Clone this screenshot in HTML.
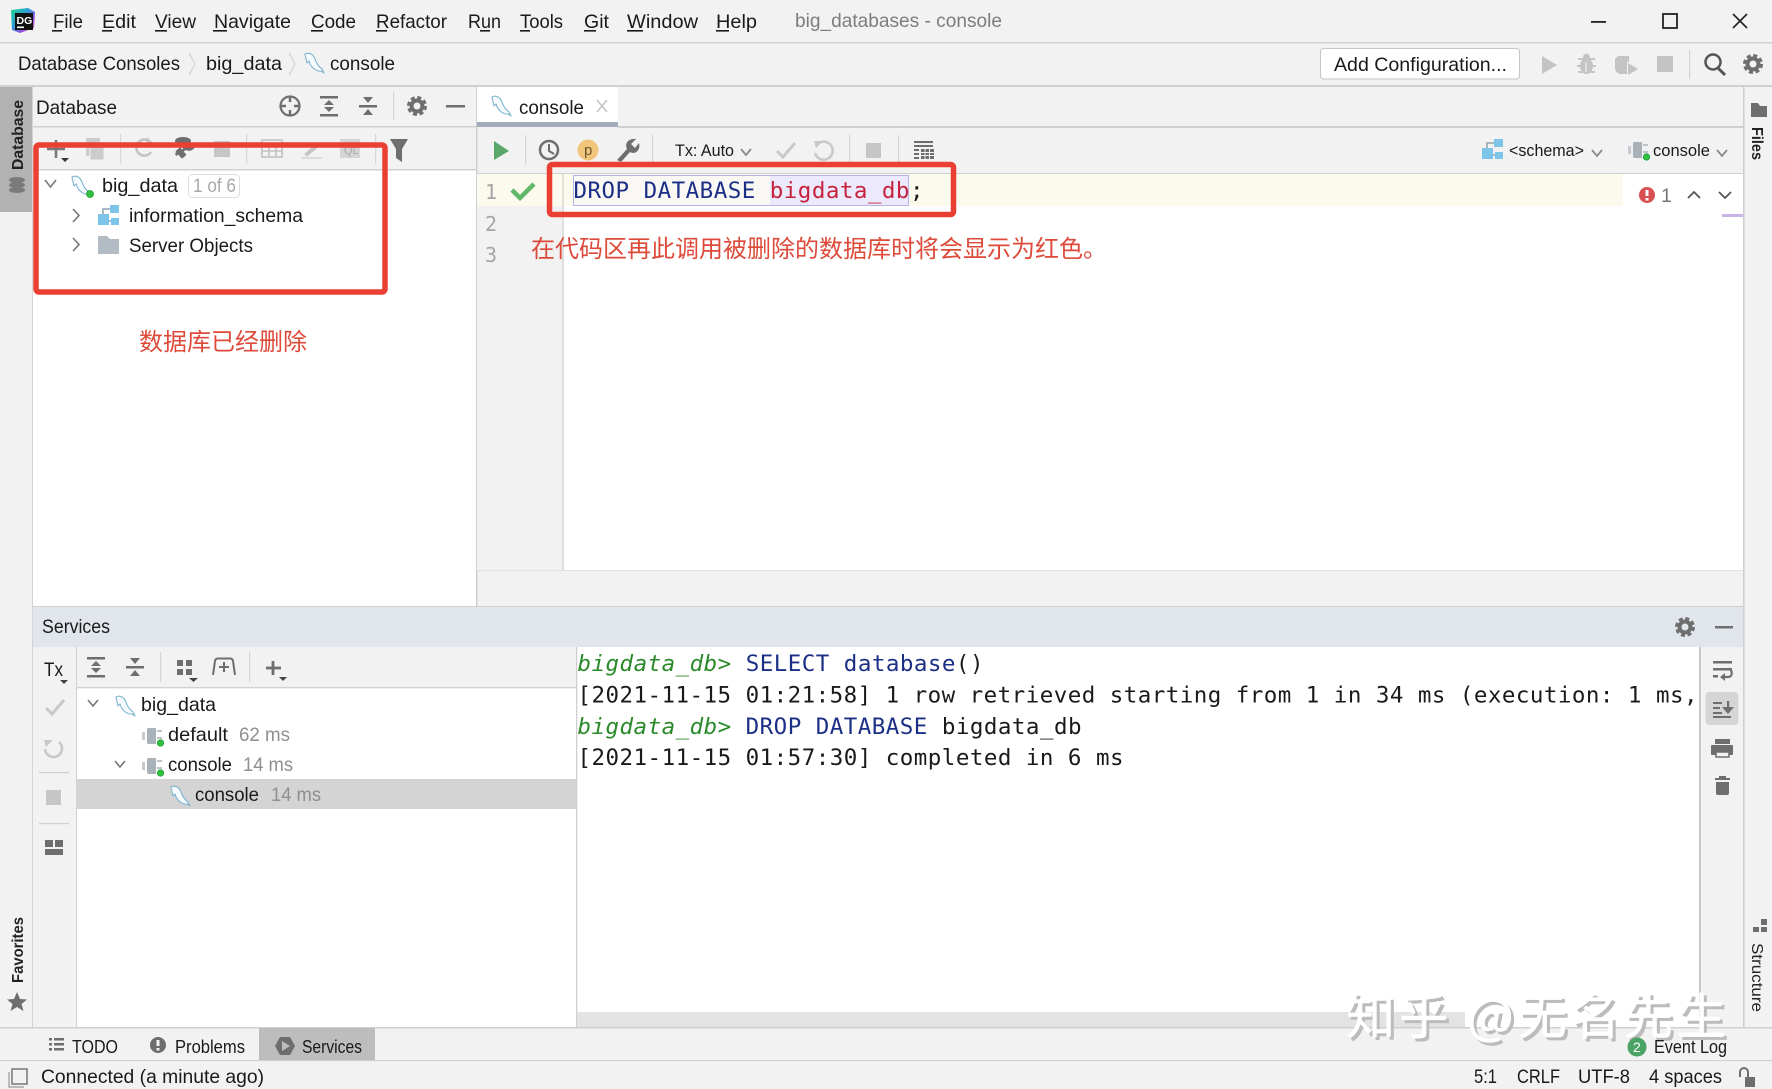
<!DOCTYPE html>
<html lang="zh"><head><meta charset="utf-8"><title>big_databases - console</title>
<style>
html,body{margin:0;padding:0;width:1772px;height:1089px;overflow:hidden;background:#f2f2f2}
svg{display:block}
text{font-family:"Liberation Sans","Noto Sans CJK SC",sans-serif;font-size:19.5px;fill:#1a1a1a;white-space:pre}
.m{font-family:"DejaVu Sans Mono","Liberation Mono",monospace;font-size:22.5px}
.g{fill:#8f8f8f}
.zh{font-family:"Noto Sans CJK SC","WenQuanYi Zen Hei",sans-serif;font-size:24px;fill:#dd4a3a}
.wm{font-family:"Noto Sans CJK SC",sans-serif;font-size:49px}
.pi{fill:none;stroke:#c2c2c2;stroke-width:2.5}
</style></head><body>
<svg width="1772" height="1089" viewBox="0 0 1772 1089" xmlns="http://www.w3.org/2000/svg">
<defs>
<linearGradient id="lg" x1="0" y1="0" x2="1" y2="1"><stop offset="0" stop-color="#21d789"/><stop offset=".4" stop-color="#2a9fd8"/><stop offset=".7" stop-color="#9a4ae0"/><stop offset="1" stop-color="#fc5fa3"/></linearGradient>
<g id="dol"><path d="M2 2C6 0 10 2 12 7C13 11 16 15 19 17L21 21L18 19L15 19C10 17 7 13 6 9L4 11L3 7C3 5 2 4 2 2Z" fill="#f6fbfe" stroke="#7fb4cf" stroke-width="1.1" stroke-linejoin="round"/></g>
<g id="conn"><path d="M8 0H15V16H8A2 2 0 0 1 6 14V2A2 2 0 0 1 8 0Z" fill="#a9b2b9"/><rect x="1" y="4" width="3" height="8" fill="#c5cbd0"/><rect x="16" y="2" width="5" height="2" fill="#bcc3c8"/><rect x="16" y="9" width="5" height="2" fill="#bcc3c8"/><circle cx="19.5" cy="15" r="3.2" fill="#2fc23f" stroke="#1f9a32" stroke-width=".8"/></g>
<g id="sch"><rect x="0" y="9" width="11" height="11" fill="#7cc4e8"/><rect x="12" y="0" width="9" height="8" fill="#7cc4e8"/><rect x="13" y="13" width="8" height="7" fill="#7cc4e8"/><path d="M5 9V4H12M11 16H13" fill="none" stroke="#8fa3b0" stroke-width="1.5"/></g>
<g id="gear"><circle r="5.5" fill="none" stroke="#6e6e6e" stroke-width="4"/><circle r="8.5" fill="none" stroke="#6e6e6e" stroke-width="3" stroke-dasharray="4 2.68"/></g>
</defs>

<!-- base panels -->
<rect width="1772" height="1089" fill="#f2f2f2"/>
<rect x="0" y="42" width="1772" height="1.5" fill="#d0d0d0"/>
<rect x="0" y="85" width="1772" height="2" fill="#d0d0d0"/>
<rect x="0" y="87" width="32" height="125" fill="#b2b2b2"/>
<rect x="32" y="87" width="1" height="940" fill="#d4d4d4"/>
<rect x="33" y="170" width="443" height="436" fill="#fff"/>
<rect x="33" y="126" width="443" height="1.5" fill="#d0d0d0"/>
<rect x="33" y="169" width="443" height="1.5" fill="#d0d0d0"/>
<rect x="476" y="87" width="1.5" height="519" fill="#cfcfcf"/>
<rect x="477" y="87" width="141" height="36" fill="#fff"/>
<rect x="477" y="122" width="141" height="5" fill="#a3acba"/>
<rect x="618" y="126" width="1126" height="2" fill="#d0d0d0"/>
<rect x="477" y="173" width="1267" height="1.5" fill="#d0d0d0"/>
<rect x="563" y="174" width="1181" height="396" fill="#fff"/>
<rect x="477" y="174" width="86" height="396" fill="#f2f2f2"/>
<rect x="477" y="174" width="1146" height="32" fill="#fcfaed"/>
<rect x="562.5" y="174" width="1.2" height="396" fill="#cfcfcf"/>
<rect x="477" y="570" width="1267" height="1" fill="#e2e2e2"/>
<rect x="1743" y="87" width="1.5" height="940" fill="#cfcfcf"/>
<rect x="1722" y="214" width="21" height="3" fill="#c9b4e8"/>

<!-- services -->
<rect x="33" y="606" width="1711" height="1.5" fill="#cfcfcf"/>
<rect x="33" y="607" width="1710" height="40" fill="#e1e5ec"/>
<rect x="76" y="688" width="501" height="339" fill="#fff"/>
<rect x="76" y="687" width="501" height="1.3" fill="#d0d0d0"/>
<rect x="76" y="647" width="1" height="380" fill="#cfcfcf"/>
<rect x="577" y="647" width="1123" height="380" fill="#fff"/>
<rect x="576" y="647" width="1.3" height="380" fill="#cfcfcf"/>
<rect x="1699" y="647" width="2" height="380" fill="#c9c9c9"/>
<rect x="76" y="779" width="500" height="30" fill="#d4d4d4"/>
<rect x="577" y="1012" width="888" height="15" fill="#e3e3e3"/>
<rect x="0" y="1027" width="1772" height="1.5" fill="#d0d0d0"/>
<rect x="259" y="1028" width="116" height="32" fill="#bdbdbd"/>
<rect x="0" y="1060" width="1772" height="1.2" fill="#d4d4d4"/>

<!-- title bar -->
<path d="M11 10L28 8L35 12L34 28L20 33L12 30Z" fill="url(#lg)"/>
<rect x="15" y="13" width="18" height="17" fill="#111"/>
<text x="16.5" y="24" style="fill:#fff;font-size:10.5px;font-weight:700">DG</text>
<rect x="17" y="26.5" width="7" height="1.6" fill="#fff"/>
<text x="53" y="28" textLength="30" lengthAdjust="spacingAndGlyphs">File</text>
<text x="102" y="28" textLength="34" lengthAdjust="spacingAndGlyphs">Edit</text>
<text x="155" y="28" textLength="41" lengthAdjust="spacingAndGlyphs">View</text>
<text x="214" y="28" textLength="77" lengthAdjust="spacingAndGlyphs">Navigate</text>
<text x="311" y="28" textLength="45" lengthAdjust="spacingAndGlyphs">Code</text>
<text x="376" y="28" textLength="71" lengthAdjust="spacingAndGlyphs">Refactor</text>
<text x="468" y="28" textLength="33" lengthAdjust="spacingAndGlyphs">Run</text>
<text x="520" y="28" textLength="43" lengthAdjust="spacingAndGlyphs">Tools</text>
<text x="584" y="28" textLength="25" lengthAdjust="spacingAndGlyphs">Git</text>
<text x="627" y="28" textLength="71" lengthAdjust="spacingAndGlyphs">Window</text>
<text x="716" y="28" textLength="41" lengthAdjust="spacingAndGlyphs">Help</text>
<g fill="#1a1a1a"><rect x="52" y="30" width="10" height="1.6"/><rect x="102" y="30" width="10" height="1.6"/><rect x="155" y="30" width="12" height="1.6"/><rect x="213" y="30" width="14" height="1.6"/><rect x="311" y="30" width="12" height="1.6"/><rect x="376" y="30" width="11" height="1.6"/><rect x="480" y="30" width="10" height="1.6"/><rect x="520" y="30" width="10" height="1.6"/><rect x="584" y="30" width="12" height="1.6"/><rect x="627" y="30" width="16" height="1.6"/><rect x="716" y="30" width="13" height="1.6"/></g>
<text x="795" y="27" textLength="207" lengthAdjust="spacingAndGlyphs" style="fill:#7d7d7d">big_databases - console</text>
<rect x="1591" y="21" width="15" height="1.8" fill="#222"/>
<rect x="1663" y="14" width="14" height="14" fill="none" stroke="#222" stroke-width="1.8"/>
<path d="M1733 14L1747 28M1747 14L1733 28" stroke="#222" stroke-width="1.6"/>

<!-- nav bar -->
<text x="18" y="70" textLength="162" lengthAdjust="spacingAndGlyphs">Database Consoles</text>
<path d="M189 53L195 64L189 75" fill="none" stroke="#d8d8d8" stroke-width="1.5"/>
<text x="206" y="70" textLength="76" lengthAdjust="spacingAndGlyphs">big_data</text>
<path d="M289 53L295 64L289 75" fill="none" stroke="#d8d8d8" stroke-width="1.5"/>
<use href="#dol" x="303" y="52"/>
<text x="330" y="70" textLength="65" lengthAdjust="spacingAndGlyphs">console</text>
<rect x="1320.5" y="48.5" width="199" height="30.5" rx="3" fill="#fff" stroke="#c6c6c6"/>
<text x="1334" y="71" textLength="173" lengthAdjust="spacingAndGlyphs">Add Configuration...</text>
<path d="M1542 56L1557 65L1542 74Z" fill="#c4c4c4"/>
<g fill="#c4c4c4"><ellipse cx="1586.5" cy="66" rx="6.5" ry="8"/><circle cx="1586.5" cy="57" r="3.5"/></g>
<path d="M1578 59L1595 59M1577 66L1596 66M1578 72L1595 72" stroke="#c4c4c4" stroke-width="2"/>
<path d="M1586 62.5V72" stroke="#f2f2f2" stroke-width="1.2"/>
<path d="M1618 56H1629V62L1627 62V74H1621A6 6 0 0 1 1615 68V59Z" fill="#c4c4c4"/><path d="M1628 63L1638 69L1628 75Z" fill="#c4c4c4"/>
<rect x="1657" y="56" width="16" height="16" fill="#c4c4c4"/>
<rect x="1689" y="50" width="1.2" height="29" fill="#d4d4d4"/>
<circle cx="1713" cy="62" r="7.5" fill="none" stroke="#555" stroke-width="2.5"/><path d="M1718 68L1725 75" stroke="#555" stroke-width="3"/>
<use href="#gear" x="1753" y="64"/>

<!-- left stripe -->
<text transform="translate(23,170) rotate(-90)" textLength="70" lengthAdjust="spacingAndGlyphs" style="font-size:16px;font-weight:700;fill:#222">Database</text>
<g fill="#7a7a7a"><ellipse cx="17" cy="180" rx="8" ry="3"/><ellipse cx="17" cy="185" rx="8" ry="3"/><ellipse cx="17" cy="190" rx="8" ry="3"/></g>
<text transform="translate(23,983) rotate(-90)" textLength="66" lengthAdjust="spacingAndGlyphs" style="font-size:16px;font-weight:700;fill:#222">Favorites</text>
<path d="M17 992L20 999L27 999.5L21.5 1004L23.5 1011L17 1007L10.5 1011L12.5 1004L7 999.5L14 999Z" fill="#6e6e6e"/>

<!-- right stripe -->
<path d="M1751 103L1758 103L1760 106L1767 106L1767 117L1751 117Z" fill="#6e6e6e"/>
<text transform="translate(1752,127) rotate(90)" textLength="33" lengthAdjust="spacingAndGlyphs" style="font-size:16px;font-weight:700;fill:#222">Files</text>
<g fill="#6e6e6e"><rect x="1753" y="927" width="6" height="5"/><rect x="1761" y="927" width="6" height="5"/><rect x="1761" y="919" width="6" height="6"/></g>
<text transform="translate(1752,943) rotate(90)" textLength="69" lengthAdjust="spacingAndGlyphs" style="font-size:16px;fill:#222">Structure</text>

<!-- database panel header -->
<text x="36" y="114" textLength="81" lengthAdjust="spacingAndGlyphs">Database</text>
<circle cx="290" cy="106" r="9.5" fill="none" stroke="#6e6e6e" stroke-width="2.2"/>
<path d="M290 96V102M290 110V116M280 106H286M294 106H300" stroke="#6e6e6e" stroke-width="2.5"/>
<g fill="#6e6e6e"><rect x="320" y="96" width="18" height="2.5"/><rect x="320" y="114" width="18" height="2.5"/><path d="M329 100L334 105H324ZM329 112L334 107H324Z"/><rect x="359" y="105" width="18" height="2.5"/><path d="M368 103L363 97H373ZM368 109L363 115H373Z"/></g>
<rect x="393" y="92" width="1.2" height="28" fill="#d4d4d4"/>
<use href="#gear" x="417" y="106"/>
<rect x="446" y="105" width="19" height="2.5" fill="#6e6e6e"/>

<!-- db toolbar -->
<path d="M56 140V158M47 149H65" stroke="#777" stroke-width="2.5"/><path d="M61 158L69 158L65 162Z" fill="#333"/>
<g fill="#cccccc"><rect x="86" y="138" width="14" height="18"/><rect x="90" y="144" width="14" height="16" stroke="#f2f2f2"/></g>
<rect x="120" y="134" width="1.2" height="30" fill="#d8d8d8"/>
<path d="M150 142A8 8 0 1 0 151 152" class="pi"/><path d="M147 137L153 143L146 145Z" fill="#c2c2c2"/>
<ellipse cx="183" cy="141" rx="8" ry="4" fill="#6e6e6e"/>
<path d="M176 156L186 150C190 152 195 150 196 144L192 148L188 146L190 143C185 142 182 146 183 149L175 153Z" fill="#6e6e6e"/><rect x="178" y="148" width="6" height="10" transform="rotate(-40 181 153)" fill="#6e6e6e"/>
<rect x="214" y="141" width="16" height="16" fill="#c6c6c6"/>
<rect x="246" y="134" width="1.2" height="30" fill="#d8d8d8"/>
<g class="pi" style="stroke-width:1.6"><rect x="262" y="140" width="20" height="17"/><path d="M262 146H282M262 151H282M269 146V157M276 146V157"/></g>
<path d="M301 158H322M305 154L317 143L319 146L307 156Z" fill="#c6c6c6" stroke="#c6c6c6"/>
<rect x="340" y="139" width="20" height="19" fill="#d5d5d5"/>
<text x="344" y="154" style="font-size:11px;fill:#a8a8a8">QL</text>
<rect x="375" y="134" width="1.2" height="30" fill="#d8d8d8"/>
<path d="M390 139H408L402 149V162L396 158V149Z" fill="#6e6e6e"/>

<!-- db tree -->
<path d="M45 180L50.5 187L56 180" fill="none" stroke="#777" stroke-width="1.6"/>
<use href="#dol" x="70" y="175"/><circle cx="90" cy="194" r="3.5" fill="#2fc23f" stroke="#1f9a32" stroke-width=".8"/>
<text x="102" y="192" textLength="76" lengthAdjust="spacingAndGlyphs">big_data</text>
<rect x="188.5" y="174.5" width="51" height="23" rx="4" fill="#fff" stroke="#dedede"/>
<text x="193" y="192" textLength="43" lengthAdjust="spacingAndGlyphs" style="fill:#a8a8a8">1 of 6</text>
<path d="M73 209L79 215.5L73 222" fill="none" stroke="#777" stroke-width="1.6"/>
<use href="#sch" x="98" y="205"/>
<text x="129" y="222" textLength="174" lengthAdjust="spacingAndGlyphs">information_schema</text>
<path d="M73 238L79 244.5L73 251" fill="none" stroke="#777" stroke-width="1.6"/>
<path d="M98 236H107L110 239H119V254H98Z" fill="#b3bcc4"/>
<text x="129" y="252" textLength="124" lengthAdjust="spacingAndGlyphs">Server Objects</text>

<!-- red annotation 1 -->
<rect x="36" y="145" width="349" height="147" rx="3" fill="none" stroke="#ea3f33" stroke-width="5.5"/>
<text x="139" y="350" class="zh">数据库已经删除</text>

<!-- editor tab -->
<use href="#dol" x="490" y="95"/>
<text x="519" y="114" textLength="65" lengthAdjust="spacingAndGlyphs">console</text>
<path d="M597 100L607 112M607 100L597 112" stroke="#c6c6c6" stroke-width="1.6"/>

<!-- editor toolbar -->
<path d="M494 141L509 151L494 160Z" fill="#59a869"/>
<rect x="525" y="135" width="1.2" height="30" fill="#d4d4d4"/>
<circle cx="549" cy="150" r="9" fill="none" stroke="#6e6e6e" stroke-width="2.5"/><path d="M549 144V151L554 154" fill="none" stroke="#6e6e6e" stroke-width="2"/>
<circle cx="588" cy="150" r="10.5" fill="#f2c57c"/><text x="584" y="155" style="font-size:15px;fill:#6b5530">p</text>
<path d="M617 160L627 149C624 143 629 138 636 139L631 144L635 148L639 143C641 150 635 155 630 152L621 162Z" fill="#6e6e6e"/>
<rect x="652" y="135" width="1.2" height="30" fill="#d4d4d4"/>
<text x="675" y="156" textLength="59" lengthAdjust="spacingAndGlyphs" style="font-size:16.5px">Tx: Auto</text>
<path d="M741 149L746 155L751 149" fill="none" stroke="#8a8a8a" stroke-width="1.8"/>
<path d="M777 151L783 157L795 143" fill="none" stroke="#c9c9c9" stroke-width="3"/>
<path d="M819 143A9 9 0 1 1 815 153" fill="none" stroke="#c9c9c9" stroke-width="2.6"/><path d="M814 141L823 141L816 148Z" fill="#c9c9c9"/>
<rect x="849" y="135" width="1.2" height="30" fill="#d4d4d4"/>
<rect x="866" y="143" width="15" height="15" fill="#c6c6c6"/>
<rect x="898" y="135" width="1.2" height="30" fill="#d4d4d4"/>
<g fill="#6e6e6e"><rect x="914" y="141" width="19" height="2"/><rect x="914" y="145" width="19" height="2"/><rect x="914" y="149" width="5" height="2"/><rect x="914" y="153" width="5" height="2"/><rect x="914" y="157" width="5" height="2"/><rect x="921" y="149" width="13" height="10"/></g>
<path d="M921 152.5H934M921 155.5H934M925 149V159M929.5 149V159" stroke="#f2f2f2" stroke-width="1"/>
<use href="#sch" x="1482" y="139"/>
<text x="1509" y="156" textLength="75" lengthAdjust="spacingAndGlyphs" style="font-size:16.5px">&lt;schema&gt;</text>
<path d="M1592 150L1597 156L1602 150" fill="none" stroke="#8a8a8a" stroke-width="1.8"/>
<use href="#conn" x="1627" y="142"/>
<text x="1653" y="156" textLength="57" lengthAdjust="spacingAndGlyphs" style="font-size:16.5px">console</text>
<path d="M1717 150L1722 156L1727 150" fill="none" stroke="#8a8a8a" stroke-width="1.8"/>

<!-- editor content -->
<text x="485" y="199" class="m" style="fill:#a5a5a5;font-size:20px">1</text>
<text x="485" y="231" class="m" style="fill:#a5a5a5;font-size:20px">2</text>
<text x="485" y="262" class="m" style="fill:#a5a5a5;font-size:20px">3</text>
<path d="M512 190L520 198L534 184" fill="none" stroke="#62b868" stroke-width="4.5"/>
<rect x="573.5" y="175.5" width="335" height="30" fill="#f9f8f4" stroke="#b5b5e8"/>
<rect x="770" y="176" width="138" height="29" fill="#ebe9fb"/>
<text x="573.5" y="198" class="m" textLength="350" lengthAdjust="spacing"><tspan style="fill:#1c2f86">DROP DATABASE </tspan><tspan style="fill:#c7223d">bigdata_db</tspan><tspan>;</tspan></text>
<rect x="549.5" y="164.5" width="404" height="50" rx="3" fill="none" stroke="#ea3f33" stroke-width="5.5"/>
<text x="531" y="257" class="zh">在代码区再此调用被删除的数据库时将会显示为红色。</text>

<circle cx="1647" cy="195" r="8" fill="#d95050"/><rect x="1645.5" y="190" width="3" height="6" fill="#fff"/><rect x="1645.5" y="198" width="3" height="2.5" fill="#fff"/>
<text x="1661" y="202" style="fill:#777">1</text>
<path d="M1688 198L1694 192L1700 198" fill="none" stroke="#555" stroke-width="1.8"/>
<path d="M1719 192L1725 198L1731 192" fill="none" stroke="#555" stroke-width="1.8"/>

<!-- services header -->
<text x="42" y="633" textLength="68" lengthAdjust="spacingAndGlyphs">Services</text>
<use href="#gear" x="1685" y="627"/>
<rect x="1715" y="626" width="18" height="2.5" fill="#6e6e6e"/>

<!-- services left toolbar -->
<text x="44" y="676" textLength="19" lengthAdjust="spacingAndGlyphs">Tx</text>
<path d="M60 680H68L64 684Z" fill="#444"/>
<path d="M46 708L52 714L64 700" fill="none" stroke="#c9c9c9" stroke-width="3"/>
<path d="M59 742A8.5 8.5 0 1 1 45 749" fill="none" stroke="#c9c9c9" stroke-width="2.6"/><path d="M44 740L53 740L46 747Z" fill="#c9c9c9"/>
<rect x="39" y="772" width="30" height="1.2" fill="#cfcfcf"/>
<rect x="46" y="790" width="15" height="15" fill="#c6c6c6"/>
<rect x="39" y="823" width="30" height="1.2" fill="#cfcfcf"/>
<g fill="#6e6e6e"><rect x="45" y="840" width="8" height="7"/><rect x="55" y="840" width="8" height="7"/><rect x="45" y="849" width="18" height="6"/></g>

<!-- services top toolbar -->
<g fill="#6e6e6e"><rect x="87" y="657" width="18" height="2.5"/><rect x="87" y="675" width="18" height="2.5"/><path d="M96 661L101 666H91ZM96 673L101 668H91Z"/><rect x="126" y="666" width="18" height="2.5"/><path d="M135 664L130 658H140ZM135 670L130 676H140Z"/>
<rect x="177" y="660" width="6" height="6"/><rect x="186" y="660" width="6" height="6"/><rect x="177" y="669" width="6" height="6"/><rect x="186" y="669" width="6" height="6"/></g>
<rect x="160" y="652" width="1.2" height="30" fill="#d4d4d4"/>
<path d="M189 678H198L193.5 682Z" fill="#444"/>
<path d="M213 675L215 661Q215.500 658.5 218 658.5H230Q232.500 658.5 233 661L235 675" fill="none" stroke="#6e6e6e" stroke-width="2"/><path d="M224 662V672M219 667H229" stroke="#6e6e6e" stroke-width="2"/>
<rect x="249" y="652" width="1.2" height="30" fill="#d4d4d4"/>
<path d="M273 661V675M266 668H281" stroke="#6e6e6e" stroke-width="2.8"/>
<path d="M279 677H287L283 681Z" fill="#444"/>

<!-- services tree -->
<path d="M88 700L93 706L98 700" fill="none" stroke="#777" stroke-width="1.6"/>
<use href="#dol" x="114" y="695"/>
<text x="141" y="711" textLength="75" lengthAdjust="spacingAndGlyphs">big_data</text>
<use href="#conn" x="141" y="728"/>
<text x="168" y="741" textLength="60" lengthAdjust="spacingAndGlyphs">default</text>
<text x="239" y="741" textLength="51" lengthAdjust="spacingAndGlyphs" class="g">62 ms</text>
<path d="M115 761L120 767L125 761" fill="none" stroke="#777" stroke-width="1.6"/>
<use href="#conn" x="141" y="758"/>
<text x="168" y="771" textLength="64" lengthAdjust="spacingAndGlyphs">console</text>
<text x="243" y="771" textLength="50" lengthAdjust="spacingAndGlyphs" class="g">14 ms</text>
<use href="#dol" x="169" y="785"/>
<text x="195" y="801" textLength="64" lengthAdjust="spacingAndGlyphs">console</text>
<text x="271" y="801" textLength="50" lengthAdjust="spacingAndGlyphs" class="g">14 ms</text>

<!-- console output -->
<text x="577.5" y="671" class="m" textLength="406" lengthAdjust="spacing"><tspan style="fill:#2a8a2a;font-style:italic">bigdata_db&gt;</tspan><tspan style="fill:#1c2f86"> SELECT database</tspan><tspan>()</tspan></text>
<text x="577.5" y="702.5" class="m" textLength="1120" lengthAdjust="spacing">[2021-11-15 01:21:58] 1 row retrieved starting from 1 in 34 ms (execution: 1 ms,</text>
<text x="577.5" y="734" class="m" textLength="504" lengthAdjust="spacing"><tspan style="fill:#2a8a2a;font-style:italic">bigdata_db&gt;</tspan><tspan style="fill:#1c2f86"> DROP DATABASE </tspan><tspan>bigdata_db</tspan></text>
<text x="577.5" y="765" class="m" textLength="546" lengthAdjust="spacing">[2021-11-15 01:57:30] completed in 6 ms</text>

<!-- services right toolbar -->
<g fill="#6e6e6e"><rect x="1713" y="661" width="19" height="2.5"/><rect x="1713" y="668" width="19" height="2.5"/><rect x="1713" y="675" width="5" height="2.5"/></g>
<path d="M1728 669C1733 669 1733 677 1728 677H1723" fill="none" stroke="#6e6e6e" stroke-width="2.2"/><path d="M1725 673V681L1720 677Z" fill="#6e6e6e"/>
<rect x="1705.5" y="692" width="33" height="33" rx="4" fill="#d5d5d5"/>
<g fill="#6e6e6e"><rect x="1713" y="702" width="9" height="2"/><rect x="1713" y="707" width="7" height="2"/><rect x="1713" y="712" width="9" height="2"/><rect x="1713" y="716" width="18" height="2"/><rect x="1727" y="701" width="2.2" height="9"/><path d="M1722 707H1734L1728 714Z"/></g>
<g fill="#6e6e6e"><rect x="1715" y="739" width="15" height="5"/><rect x="1711" y="745" width="22" height="10" rx="1"/><rect x="1716" y="752" width="13" height="5" fill="#f2f2f2" stroke="#6e6e6e" stroke-width="1.5"/></g>
<g fill="#6e6e6e"><rect x="1715" y="778" width="15" height="2"/><rect x="1719" y="776" width="7" height="2"/><path d="M1716 782H1729V793A2 2 0 0 1 1727 795H1718A2 2 0 0 1 1716 793Z"/></g>

<!-- bottom tabs -->
<g fill="#6e6e6e"><rect x="49" y="1038" width="3" height="2.5"/><rect x="54" y="1038" width="10" height="2.5"/><rect x="49" y="1043" width="3" height="2.5"/><rect x="54" y="1043" width="10" height="2.5"/><rect x="49" y="1048" width="3" height="2.5"/><rect x="54" y="1048" width="10" height="2.5"/></g>
<text x="72" y="1053" textLength="46" lengthAdjust="spacingAndGlyphs" style="font-size:18px">TODO</text>
<circle cx="158" cy="1045" r="8" fill="#6e6e6e"/><rect x="156.5" y="1040" width="3" height="6" fill="#f2f2f2"/><rect x="156.5" y="1048" width="3" height="2.5" fill="#f2f2f2"/>
<text x="175" y="1053" textLength="70" lengthAdjust="spacingAndGlyphs" style="font-size:18px">Problems</text>
<path d="M280 1037H290L295 1046L290 1055H280L275 1046Z" fill="#6e6e6e"/><path d="M282 1041L290 1046L282 1051Z" fill="#bdbdbd"/>
<text x="302" y="1053" textLength="60" lengthAdjust="spacingAndGlyphs" style="font-size:18px">Services</text>

<!-- watermark -->
<text x="1349" y="1037" class="wm" textLength="380" lengthAdjust="spacing" style="fill:#bcbcbc;stroke:#bcbcbc;stroke-width:.6">知乎 @无名先生</text>
<text x="1346" y="1034" class="wm" textLength="380" lengthAdjust="spacing" style="fill:#fff;stroke:#fff;stroke-width:.6">知乎 @无名先生</text>

<!-- event log -->
<circle cx="1637" cy="1047" r="9.5" fill="#4aa264"/>
<text x="1633" y="1052" style="font-size:14px;fill:#fff">2</text>
<text x="1654" y="1053" textLength="73" lengthAdjust="spacingAndGlyphs" style="font-size:18px">Event Log</text>

<!-- status bar -->
<rect x="12" y="1069" width="15" height="15" fill="none" stroke="#777" stroke-width="1.5"/><path d="M9 1072V1087H24" fill="none" stroke="#999" stroke-width="1.2"/>
<text x="41" y="1083" textLength="223" lengthAdjust="spacingAndGlyphs">Connected (a minute ago)</text>
<text x="1474" y="1083" textLength="23" lengthAdjust="spacingAndGlyphs">5:1</text>
<text x="1517" y="1083" textLength="43" lengthAdjust="spacingAndGlyphs">CRLF</text>
<text x="1578" y="1083" textLength="52" lengthAdjust="spacingAndGlyphs">UTF-8</text>
<text x="1649" y="1083" textLength="73" lengthAdjust="spacingAndGlyphs">4 spaces</text>
<rect x="1745" y="1077" width="10" height="10" fill="#6e6e6e"/><path d="M1740 1077V1072A4 4 0 0 1 1748 1072V1077" fill="none" stroke="#6e6e6e" stroke-width="2"/>
</svg>
</body></html>
